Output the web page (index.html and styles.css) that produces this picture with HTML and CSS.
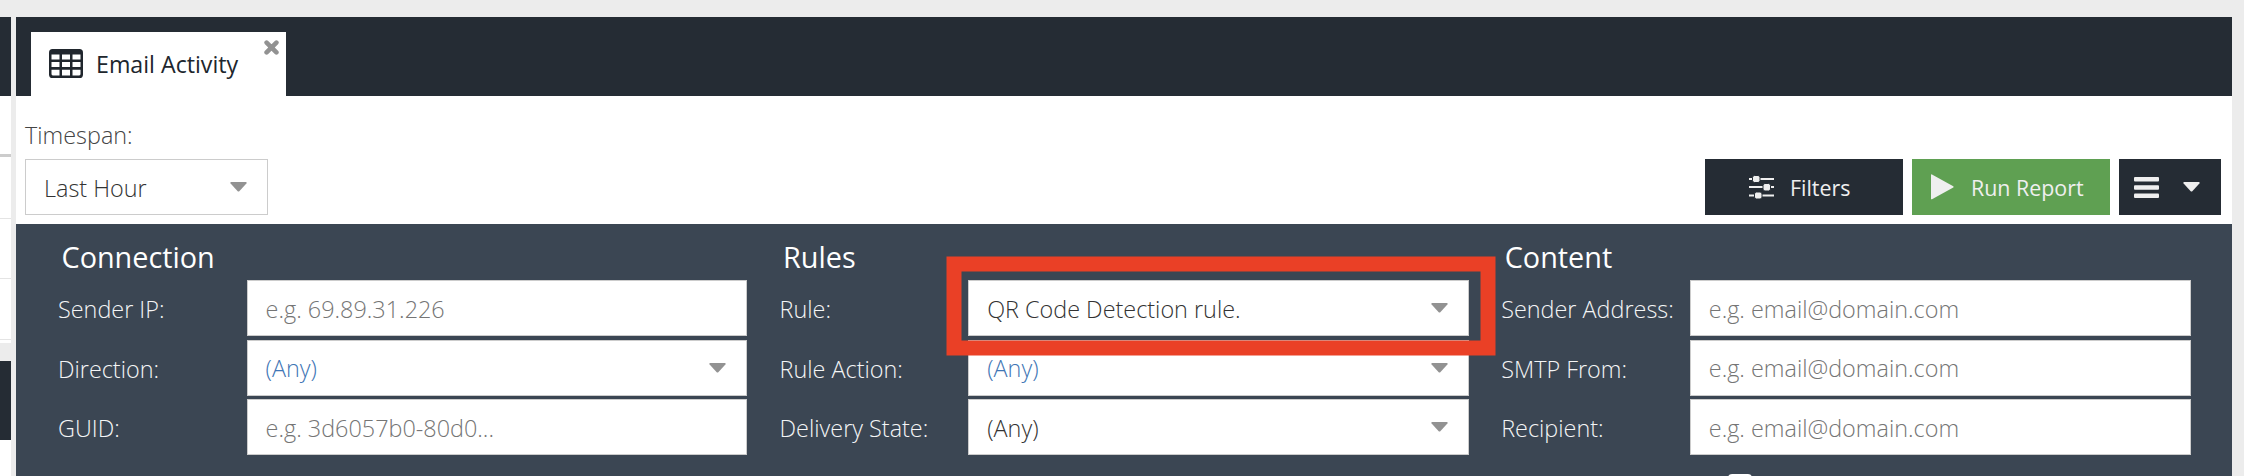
FILE: index.html
```
<!DOCTYPE html>
<html lang="en">
<head>
    <meta charset="UTF-8">
    <meta name="viewport" content="width=device-width, initial-scale=1.0">
    <title>Email Activity</title>
    <link rel="stylesheet" href="styles.css">
</head>
<body>
    <svg class="symbols" width="0" height="0">
        <symbol id="caret" viewBox="0 0 17 10">
            <path d="M1.2 0h14.6q1.4 0.3 0.6 1.5L9.3 9.2q-0.8 0.8-1.6 0L0.6 1.5Q-0.2 0.3 1.2 0z" fill="currentColor"/>
        </symbol>
    </svg>

    <div class="layout">
        <div class="side">
            <div class="side-bar"></div>
            <div class="side-list">
                <div class="side-row side-row-head"></div>
                <div class="side-row side-row-first"></div>
                <div class="side-row"></div>
                <div class="side-row"></div>
            </div>
            <div class="side-bar side-bar-second"></div>
            <div class="side-rest"></div>
        </div>

        <div class="main">
            <div class="tabs">
                <div class="tab">
                    <svg class="tab-icon" width="34" height="29" viewBox="0 0 34 28" preserveAspectRatio="none">
                        <path fill="#20262d" fill-rule="evenodd" d="M3.500 0h27Q34 0 34 3.500v21Q34 28 30.500 28h-27Q0 28 0 24.500v-21Q0 0 3.500 0zM2.500 5.300v4.900h8V5.300zM13 5.300v4.900h8V5.300zM23.500 5.300v4.900h8V5.300zM2.500 12.500v4.900h8v-4.900zM13 12.500v4.900h8v-4.900zM23.500 12.500v4.900h8v-4.900zM2.500 20v4.200q0 1.300 1.300 1.300h6.700V20zM13 20v5.500h8V20zM23.500 20v5.500h6.700q1.300 0 1.300-1.300V20z"/>
                    </svg>
                    <span class="tab-title">Email Activity</span>
                    <svg class="tab-close" width="15" height="15" viewBox="0 0 15 15">
                        <path d="M2.600 2.600l9.800 9.800M12.400 2.600l-9.800 9.800" stroke="#929292" stroke-width="4.600" stroke-linecap="round"/>
                    </svg>
                </div>
            </div>

            <div class="toolbar">
                <div class="timespan">
                    <label class="timespan-label">Timespan:</label>
                    <div class="select timespan-select"><span>Last Hour</span><svg class="caret"><use href="#caret"/></svg></div>
                </div>
                <div class="buttons">
                    <button class="btn btn-filters">
                        <svg width="25" height="24" viewBox="0 0 25 24">
                            <path d="M0 4h25M0 12h25M0 20.500h25" stroke="#efefef" stroke-width="2"/>
                            <g fill="#efefef" stroke="#252c34" stroke-width="1">
                                <rect x="3.500" y="0.500" width="7.500" height="7" rx="2"/>
                                <rect x="14" y="8.500" width="7.500" height="7.500" rx="2"/>
                                <rect x="5.500" y="17" width="7.500" height="7" rx="2"/>
                            </g>
                        </svg>
                        <span>Filters</span>
                    </button>
                    <button class="btn btn-run">
                        <svg width="23" height="26" viewBox="0 0 23 26">
                            <path d="M0 1Q0 0 1 0.500L22.300 12.300Q23 13 22.300 13.500L1 25.200Q0 25.700 0 24.700z" fill="#efefef"/>
                        </svg>
                        <span>Run Report</span>
                    </button>
                    <button class="btn btn-menu">
                        <svg width="25" height="21" viewBox="0 0 25 21">
                            <g fill="#efefef">
                                <rect y="0" width="25" height="4.500" rx="1"/>
                                <rect y="8.200" width="25" height="4.500" rx="1"/>
                                <rect y="16.500" width="25" height="4.500" rx="1"/>
                            </g>
                        </svg>
                        <svg class="caret"><use href="#caret"/></svg>
                    </button>
                </div>
            </div>

            <div class="filters">
                <div class="group">
                    <h2>Connection</h2>
                    <div class="field"><label>Sender IP:</label><input type="text" placeholder="e.g. 69.89.31.226"></div>
                    <div class="field"><label>Direction:</label><div class="select any"><span>(Any)</span><svg class="caret"><use href="#caret"/></svg></div></div>
                    <div class="field"><label>GUID:</label><input type="text" placeholder="e.g. 3d6057b0-80d0..."></div>
                </div>
                <div class="group">
                    <h2>Rules</h2>
                    <div class="field"><label>Rule:</label><div class="select"><span>QR Code Detection rule.</span><svg class="caret"><use href="#caret"/></svg></div>
                        <svg class="highlight" width="550" height="100" viewBox="0 0 550 100">
                            <rect x="8" y="8" width="534" height="84" fill="none" stroke="#ea4026" stroke-width="15"/>
                        </svg>
                    </div>
                    <div class="field"><label>Rule Action:</label><div class="select any"><span>(Any)</span><svg class="caret"><use href="#caret"/></svg></div></div>
                    <div class="field"><label>Delivery State:</label><div class="select"><span>(Any)</span><svg class="caret"><use href="#caret"/></svg></div></div>
                </div>
                <div class="group">
                    <h2>Content</h2>
                    <div class="field"><label>Sender Address:</label><input type="text" placeholder="e.g. email@domain.com"></div>
                    <div class="field"><label>SMTP From:</label><input type="text" placeholder="e.g. email@domain.com"></div>
                    <div class="field"><label>Recipient:</label><input type="text" placeholder="e.g. email@domain.com"></div>
                    <div class="checkbox"></div>
                </div>
            </div>
        </div>
    </div>
</body>
</html>
```
FILE: styles.css
```
* {
    box-sizing: border-box;
}

body {
    margin: 0;
    height: 476px;
    overflow: hidden;
    background-color: #ececec;
    font-family: "Open Sans", sans-serif;
    font-weight: 300;
    font-size: 23.4px;
    line-height: 33px;
    color: #444;
}

.symbols {
    display: none;
}

.layout {
    display: flex;
    gap: 5px;
    height: 476px;
    padding: 17px 12px 0 0;
}

/* slice of the neighbouring panel */
.side {
    display: flex;
    flex-direction: column;
    width: 11px;
}

.side-bar {
    height: 79px;
    background-color: #252c34;
}

.side-bar-second {
    margin-top: 18px;
}

.side-list {
    height: 247px;
    background-color: #fff;
}

.side-row {
    height: 60px;
    border-bottom: 1px solid #e4e4e4;
}

.side-row-head {
    height: 61px;
    border-bottom: 3px solid #ccc;
}

.side-row-first {
    height: 62px;
}

.side-row:last-child {
    height: 61px;
}

.side-rest {
    flex: 1;
    background-color: #fff;
}

.main {
    flex: 1;
    display: flex;
    flex-direction: column;
    background-color: #fff;
}

.tabs {
    display: flex;
    flex-shrink: 0;
    height: 79px;
    padding: 15px 15px 0;
    background-color: #252c34;
}

.tab {
    position: relative;
    display: flex;
    align-items: center;
    width: 255px;
    padding-left: 18px;
    background-color: #fff;
    color: #20262d;
    font-weight: 400;
}

.tab-icon {
    margin: 0 13px 2px 0;
}

.tab-title {
    font-size: 23.2px;
}

.tab-close {
    position: absolute;
    top: 8px;
    right: 7px;
}

.toolbar {
    display: flex;
    flex-shrink: 0;
    justify-content: space-between;
    align-items: flex-end;
    height: 128px;
    padding: 0 11px 9px 9px;
}

.timespan {
    display: flex;
    flex-direction: column;
}

.timespan-label {
    height: 40px;
}

.select,
input {
    width: 500.8px;
    height: 56px;
    padding: 0 20px 0 18px;
    border: 1px solid #ccc;
    border-radius: 0;
    background-color: #fff;
    color: #333;
    font: inherit;
}

input {
    padding-top: 2px;
}

.select {
    display: flex;
    align-items: center;
    justify-content: space-between;
}

.select span {
    padding-top: 2px;
}

.timespan-select {
    width: 243px;
}

.any {
    color: #3f76b5;
}

/* the middle row sits a pixel higher */
.field:nth-of-type(2) input,
.field:nth-of-type(2) .select span {
    padding-top: 0;
}

input::placeholder {
    color: #757575;
    opacity: 1;
}

.caret {
    width: 17px;
    height: 10px;
    color: #929292;
}

.buttons {
    display: flex;
    gap: 9px;
}

.btn {
    display: flex;
    align-items: center;
    width: 198px;
    height: 56px;
    padding: 0;
    border: none;
    background-color: #252c34;
    color: #efefef;
    font: inherit;
    font-size: 21.4px;
    font-weight: 400;
}

.btn-filters {
    padding-left: 44px;
    gap: 16px;
}

.btn-run {
    padding-left: 19px;
    gap: 17px;
    background-color: #5fa052;
}

.btn-menu {
    width: 102px;
    padding-left: 15px;
    gap: 24px;
}

.btn .caret {
    color: #efefef;
}

.filters {
    flex: 1;
    display: flex;
    min-height: 0;
    padding-left: 42px;
    background-color: #3b4653;
    color: #f4f5f6;
    overflow: hidden;
}

.group {
    width: 721.6px;
    flex-shrink: 0;
}

.group:last-child {
    width: 700px;
}

h2 {
    height: 56px;
    margin: 0;
    padding: 13px 0 0 3.5px;
    color: #fff;
    font-size: 28.8px;
    font-weight: 400;
    line-height: 40px;
}

.field {
    position: relative;
    display: flex;
    align-items: center;
    height: 56px;
    margin-bottom: 4px;
}

.field:nth-of-type(2) {
    margin-bottom: 3px;
}

.field label {
    width: 188.6px;
    padding-top: 2px;
}

/* annotation frame over the rule field */
.highlight {
    position: absolute;
    left: 166.4px;
    top: -24px;
    z-index: 1;
}

.checkbox {
    width: 24px;
    height: 24px;
    margin: 19px 0 0 227px;
    border-radius: 4px;
    background-color: #fff;
}
```
